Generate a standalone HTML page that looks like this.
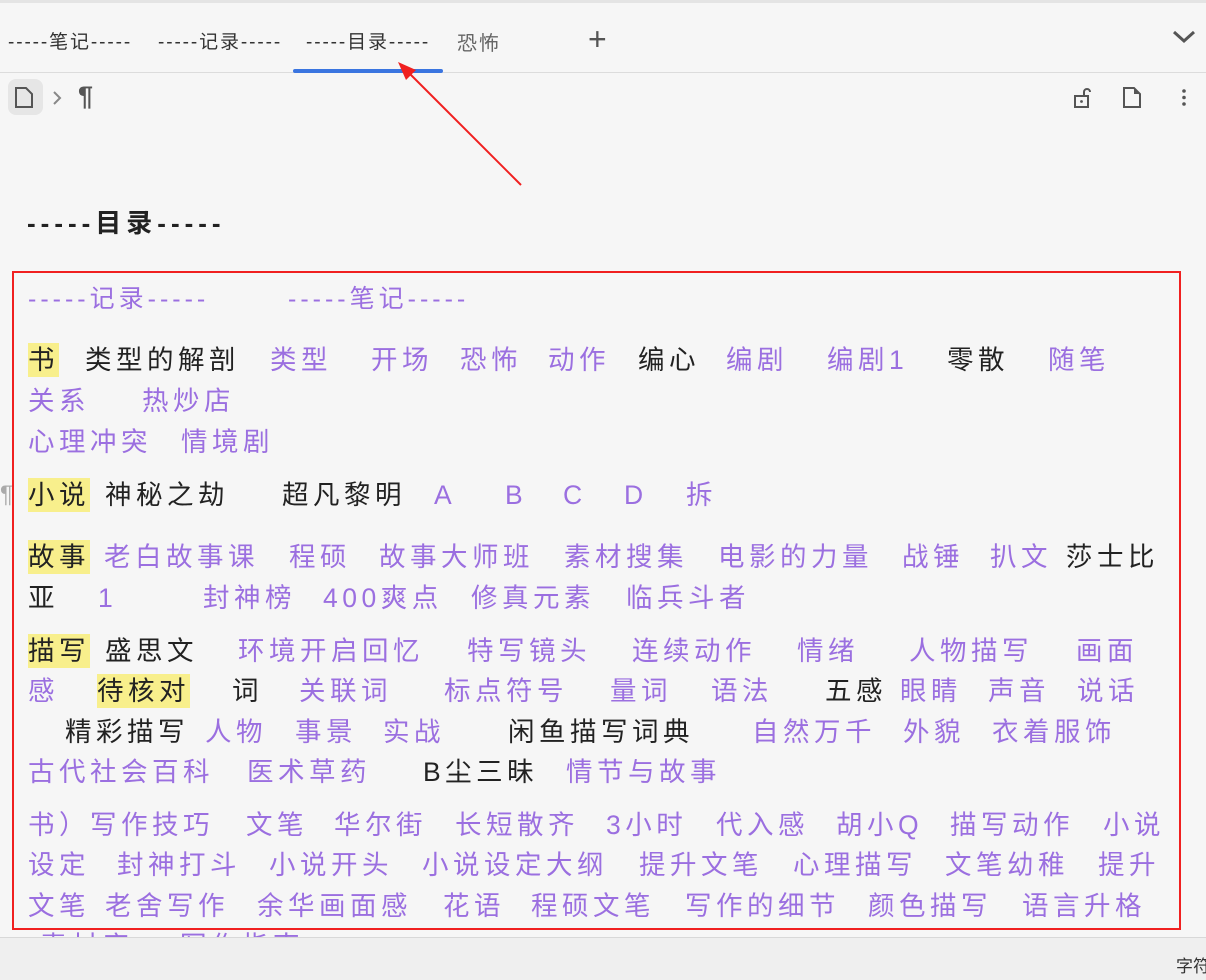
<!DOCTYPE html>
<html><head><meta charset="utf-8"><style>
*{margin:0;padding:0;box-sizing:border-box}
body{width:1206px;height:980px;overflow:hidden;background:#f6f6f6;font-family:"Liberation Sans","Noto Sans CJK SC",sans-serif;position:relative}
.tabbar{position:absolute;left:0;top:0;width:1206px;height:73px;border-top:3px solid #e4e4e4;border-bottom:1px solid #dcdcdc;background:#f6f6f6}
.tab{position:absolute;top:24px;font-size:19px;color:#333;white-space:nowrap;letter-spacing:1.9px}
.ul{position:absolute;left:293px;top:66px;width:150px;height:4px;border-radius:2px;background:#3a75e0}
.t{position:absolute;white-space:nowrap;font-size:26.5px;line-height:36px;letter-spacing:4.5px;color:#9b6fe0}
.k{color:#222}
.h{background:#f8ef8c;color:#222;padding:2px 0}
.d{letter-spacing:4px;font-size:25px}
.status{position:absolute;left:0;top:937px;width:1206px;height:43px;background:#efefef;border-top:1px solid #d8d8d8}
</style></head><body>
<div class="tabbar">
<div class="tab" style="left:8px">-----笔记-----</div>
<div class="tab" style="left:158px">-----记录-----</div>
<div class="tab" style="left:306px">-----目录-----</div>
<div class="tab" style="left:457px;color:#666;font-size:20px">恐怖</div>
<div class="tab" style="left:588px;top:18px;font-size:32px;color:#555;font-weight:300">+</div>
<svg style="position:absolute;left:1172px;top:26px" width="24" height="16"><path d="M2 3 L12 12 L22 3" stroke="#555" stroke-width="3" fill="none"/></svg>
<div class="ul"></div>
</div>
<div style="position:absolute;left:8px;top:79px;width:35px;height:36px;background:#e6e6e6;border-radius:8px"></div>
<svg style="position:absolute;left:14px;top:86px" width="22" height="24"><path d="M2 2 H12 L18 8 V21 H2 Z" stroke="#555" stroke-width="2" fill="none"/></svg>
<svg style="position:absolute;left:51px;top:89px" width="12" height="18"><path d="M3 3 L9 9 L3 15" stroke="#888" stroke-width="2" fill="none"/></svg>
<div style="position:absolute;left:78px;top:81px;font-size:27px;color:#555;font-weight:bold">¶</div>
<svg style="position:absolute;left:1072px;top:86px" width="22" height="24"><path d="M3 10 H16 V21 H3 Z" stroke="#555" stroke-width="2" fill="none"/><path d="M12 10 V6 A3 3 0 0 1 18 6" stroke="#555" stroke-width="2" fill="none"/><circle cx="9.5" cy="15.5" r="1.4" fill="#555"/></svg>
<svg style="position:absolute;left:1122px;top:86px" width="22" height="24"><path d="M2 2 H12 L18 8 V21 H2 Z" stroke="#555" stroke-width="2" fill="none"/><path d="M12 2 L18 8 H12Z" fill="#555"/></svg>
<svg style="position:absolute;left:1180px;top:88px" width="8" height="20"><circle cx="4" cy="3" r="1.8" fill="#555"/><circle cx="4" cy="9.5" r="1.8" fill="#555"/><circle cx="4" cy="16" r="1.8" fill="#555"/></svg>
<div style="position:absolute;left:27px;top:203px;font-size:26px;font-weight:bold;color:#222;letter-spacing:5px">-----目录-----</div>
<svg style="position:absolute;left:0;top:0" width="1206" height="980"><path d="M521 185 L404 68" stroke="#f02020" stroke-width="2"/><path d="M398 62 L416 70 L406 80 Z" fill="#f02020"/></svg>
<div style="position:absolute;left:0;top:481px;font-size:24px;color:#aaa">¶</div>

<div class="t d" style="left:28px;top:281px">-----记录-----</div>
<div class="t d" style="left:288px;top:281px">-----笔记-----</div>

<div class="t" style="left:28px;top:342px"><span class="h">书</span></div>
<div class="t k" style="left:85px;top:342px">类型的解剖</div>
<div class="t" style="left:270px;top:342px">类型</div>
<div class="t" style="left:371px;top:342px">开场</div>
<div class="t" style="left:460px;top:342px">恐怖</div>
<div class="t" style="left:548px;top:342px">动作</div>
<div class="t k" style="left:638px;top:342px">编心</div>
<div class="t" style="left:726px;top:342px">编剧</div>
<div class="t" style="left:827px;top:342px">编剧1</div>
<div class="t k" style="left:947px;top:342px">零散</div>
<div class="t" style="left:1048px;top:342px">随笔</div>
<div class="t" style="left:28px;top:383px">关系</div>
<div class="t" style="left:142px;top:383px">热炒店</div>
<div class="t" style="left:28px;top:424px">心理冲突</div>
<div class="t" style="left:181px;top:424px">情境剧</div>

<div class="t" style="left:28px;top:477px"><span class="h">小说</span></div>
<div class="t k" style="left:105px;top:477px">神秘之劫</div>
<div class="t k" style="left:282px;top:477px">超凡黎明</div>
<div class="t" style="left:434px;top:477px">A</div>
<div class="t" style="left:505px;top:477px">B</div>
<div class="t" style="left:563px;top:477px">C</div>
<div class="t" style="left:624px;top:477px">D</div>
<div class="t" style="left:686px;top:477px">拆</div>

<div class="t" style="left:28px;top:539px"><span class="h">故事</span></div>
<div class="t" style="left:104px;top:539px">老白故事课</div>
<div class="t" style="left:289px;top:539px">程硕</div>
<div class="t" style="left:379px;top:539px">故事大师班</div>
<div class="t" style="left:564px;top:539px">素材搜集</div>
<div class="t" style="left:718px;top:539px">电影的力量</div>
<div class="t" style="left:902px;top:539px">战锤</div>
<div class="t" style="left:990px;top:539px">扒文</div>
<div class="t k" style="left:1066px;top:539px">莎士比</div>
<div class="t k" style="left:28px;top:580px">亚</div>
<div class="t" style="left:98px;top:580px">1</div>
<div class="t" style="left:203px;top:580px">封神榜</div>
<div class="t" style="left:323px;top:580px">400爽点</div>
<div class="t" style="left:471px;top:580px">修真元素</div>
<div class="t" style="left:626px;top:580px">临兵斗者</div>

<div class="t" style="left:28px;top:633px"><span class="h">描写</span></div>
<div class="t k" style="left:105px;top:633px">盛思文</div>
<div class="t" style="left:238px;top:633px">环境开启回忆</div>
<div class="t" style="left:467px;top:633px">特写镜头</div>
<div class="t" style="left:632px;top:633px">连续动作</div>
<div class="t" style="left:797px;top:633px">情绪</div>
<div class="t" style="left:909px;top:633px">人物描写</div>
<div class="t" style="left:1076px;top:633px">画面</div>
<div class="t" style="left:28px;top:673px">感</div>
<div class="t" style="left:97px;top:673px"><span class="h">待核对</span></div>
<div class="t k" style="left:232px;top:673px">词</div>
<div class="t" style="left:299px;top:673px">关联词</div>
<div class="t" style="left:444px;top:673px">标点符号</div>
<div class="t" style="left:610px;top:673px">量词</div>
<div class="t" style="left:711px;top:673px">语法</div>
<div class="t k" style="left:825px;top:673px">五感</div>
<div class="t" style="left:900px;top:673px">眼睛</div>
<div class="t" style="left:988px;top:673px">声音</div>
<div class="t" style="left:1077px;top:673px">说话</div>
<div class="t k" style="left:65px;top:714px">精彩描写</div>
<div class="t" style="left:205px;top:714px">人物</div>
<div class="t" style="left:295px;top:714px">事景</div>
<div class="t" style="left:383px;top:714px">实战</div>
<div class="t k" style="left:508px;top:714px">闲鱼描写词典</div>
<div class="t" style="left:752px;top:714px">自然万千</div>
<div class="t" style="left:903px;top:714px">外貌</div>
<div class="t" style="left:992px;top:714px">衣着服饰</div>
<div class="t" style="left:28px;top:754px">古代社会百科</div>
<div class="t" style="left:247px;top:754px">医术草药</div>
<div class="t k" style="left:423px;top:754px">B尘三昧</div>
<div class="t" style="left:566px;top:754px">情节与故事</div>

<div class="t" style="left:28px;top:807px">书）写作技巧</div>
<div class="t" style="left:246px;top:807px">文笔</div>
<div class="t" style="left:334px;top:807px">华尔街</div>
<div class="t" style="left:455px;top:807px">长短散齐</div>
<div class="t" style="left:606px;top:807px">3小时</div>
<div class="t" style="left:716px;top:807px">代入感</div>
<div class="t" style="left:836px;top:807px">胡小Q</div>
<div class="t" style="left:950px;top:807px">描写动作</div>
<div class="t" style="left:1103px;top:807px">小说</div>
<div class="t" style="left:28px;top:847px">设定</div>
<div class="t" style="left:117px;top:847px">封神打斗</div>
<div class="t" style="left:269px;top:847px">小说开头</div>
<div class="t" style="left:422px;top:847px">小说设定大纲</div>
<div class="t" style="left:639px;top:847px">提升文笔</div>
<div class="t" style="left:793px;top:847px">心理描写</div>
<div class="t" style="left:945px;top:847px">文笔幼稚</div>
<div class="t" style="left:1098px;top:847px">提升</div>
<div class="t" style="left:28px;top:888px">文笔</div>
<div class="t" style="left:105px;top:888px">老舍写作</div>
<div class="t" style="left:257px;top:888px">余华画面感</div>
<div class="t" style="left:443px;top:888px">花语</div>
<div class="t" style="left:531px;top:888px">程硕文笔</div>
<div class="t" style="left:685px;top:888px">写作的细节</div>
<div class="t" style="left:868px;top:888px">颜色描写</div>
<div class="t" style="left:1022px;top:888px">语言升格</div>
<div class="t" style="left:40px;top:928px">素材库</div>
<div class="t" style="left:180px;top:928px">写作指南</div>

<div style="position:absolute;left:12px;top:271px;width:1169px;height:659px;border:2px solid #f02020"></div>
<div class="status"><div style="position:absolute;left:1176px;top:14px;font-size:17px;color:#333;white-space:nowrap">字符</div></div>
</body></html>
